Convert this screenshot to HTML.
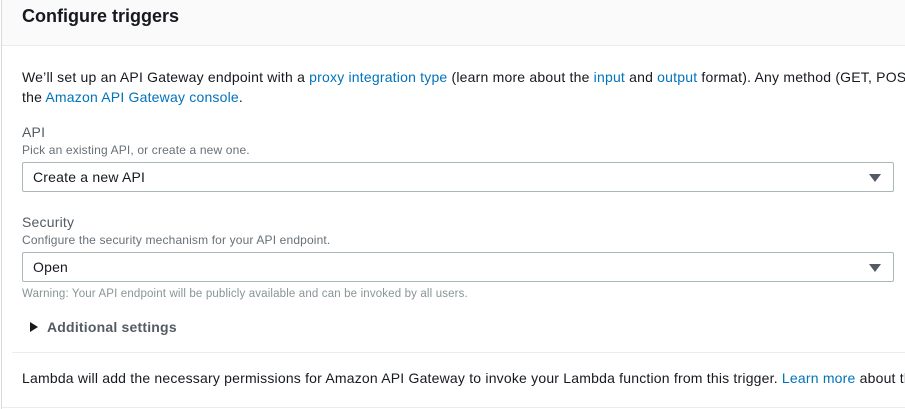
<!DOCTYPE html>
<html><head><style>
*{margin:0;padding:0;box-sizing:border-box}
body{width:905px;height:409px;overflow:hidden;background:#fff;font-family:"Liberation Sans",sans-serif;color:#16191f;position:relative}
.wrap{position:absolute;left:0;top:0;width:905px;height:409px;overflow:hidden}
.lb{position:absolute;left:1px;top:0;width:1px;height:409px;background:#d5dbdb}
.hd{position:absolute;left:2px;top:0;width:903px;height:46px;background:#fafafa;border-bottom:1px solid #eaeded}
.hd h2{position:absolute;left:20px;top:6px;font-size:18px;font-weight:bold;white-space:nowrap}
.t{position:absolute;white-space:nowrap;font-size:14px;letter-spacing:0.2px}
a{color:#0073bb;text-decoration:none}
.s{color:#687078;font-size:12px;letter-spacing:0.15px}
.sel{position:absolute;left:22px;width:872px;height:30px;border:1px solid #aab7b8;border-radius:2px}
.sel span{position:absolute;left:10px;top:6px;font-size:14px;letter-spacing:0.2px}
.sel i{position:absolute;right:12px;top:11px;width:0;height:0;border-left:6px solid transparent;border-right:6px solid transparent;border-top:8px solid #545b64}
.div{position:absolute;left:12px;top:352px;width:893px;height:1px;background:#eaeded}
.bt{position:absolute;left:2px;top:407px;width:903px;height:1px;background:#eaeded}
.tri{position:absolute;left:30px;top:322px;width:0;height:0;border-top:5px solid transparent;border-bottom:5px solid transparent;border-left:8px solid #16191f}
</style></head><body><div class="wrap">
<div class="lb"></div>
<div class="hd"><h2>Configure triggers</h2></div>
<div class="t" style="left:22px;top:69px">We’ll set up an API Gateway endpoint with a <a>proxy integration type</a> (learn more about the <a>input</a> and <a>output</a> format). Any method (GET, POST</div>
<div class="t" style="left:22px;top:89px">the <a>Amazon API Gateway console</a>.</div>
<div class="t" style="left:22px;top:124px;color:#545b64">API</div>
<div class="t s" style="left:22px;top:143px">Pick an existing API, or create a new one.</div>
<div class="sel" style="top:162px"><span>Create a new API</span><i></i></div>
<div class="t" style="left:22px;top:214px;color:#545b64">Security</div>
<div class="t s" style="left:22px;top:233px">Configure the security mechanism for your API endpoint.</div>
<div class="sel" style="top:252px"><span>Open</span><i></i></div>
<div class="t s" style="left:22px;top:288px;font-size:11.5px;color:#879596">Warning: Your API endpoint will be publicly available and can be invoked by all users.</div>
<div class="tri"></div>
<div class="t" style="left:47px;top:319px;font-weight:bold;color:#545b64">Additional settings</div>
<div class="div"></div>
<div class="t" style="left:22px;top:370px">Lambda will add the necessary permissions for Amazon API Gateway to invoke your Lambda function from this trigger. <a>Learn more</a> about th</div>
<div class="bt"></div>
</div></body></html>
